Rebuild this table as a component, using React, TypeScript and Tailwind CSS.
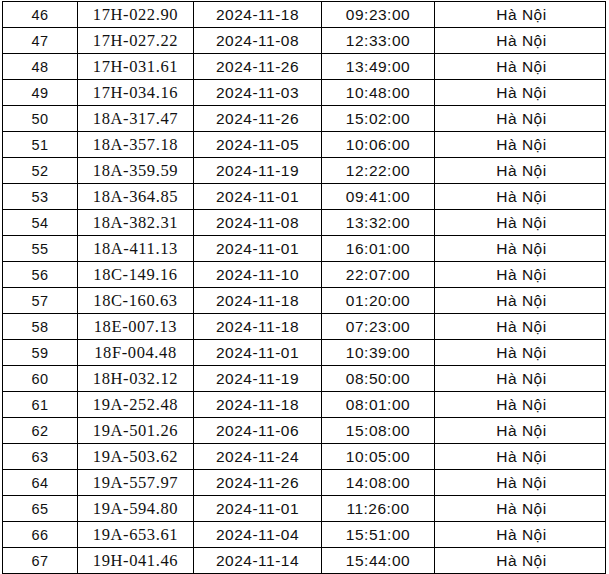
import React from "react";

const rows: [number, string, string, string][] = [
  [46, "17H-022.90", "2024-11-18", "09:23:00"],
  [47, "17H-027.22", "2024-11-08", "12:33:00"],
  [48, "17H-031.61", "2024-11-26", "13:49:00"],
  [49, "17H-034.16", "2024-11-03", "10:48:00"],
  [50, "18A-317.47", "2024-11-26", "15:02:00"],
  [51, "18A-357.18", "2024-11-05", "10:06:00"],
  [52, "18A-359.59", "2024-11-19", "12:22:00"],
  [53, "18A-364.85", "2024-11-01", "09:41:00"],
  [54, "18A-382.31", "2024-11-08", "13:32:00"],
  [55, "18A-411.13", "2024-11-01", "16:01:00"],
  [56, "18C-149.16", "2024-11-10", "22:07:00"],
  [57, "18C-160.63", "2024-11-18", "01:20:00"],
  [58, "18E-007.13", "2024-11-18", "07:23:00"],
  [59, "18F-004.48", "2024-11-01", "10:39:00"],
  [60, "18H-032.12", "2024-11-19", "08:50:00"],
  [61, "19A-252.48", "2024-11-18", "08:01:00"],
  [62, "19A-501.26", "2024-11-06", "15:08:00"],
  [63, "19A-503.62", "2024-11-24", "10:05:00"],
  [64, "19A-557.97", "2024-11-26", "14:08:00"],
  [65, "19A-594.80", "2024-11-01", "11:26:00"],
  [66, "19A-653.61", "2024-11-04", "15:51:00"],
  [67, "19H-041.46", "2024-11-14", "15:44:00"],
];

const sans = "font-['Liberation_Sans',Arial,sans-serif]";
const serif = "font-['Liberation_Serif','Times_New_Roman',serif]";

export default function App() {
  return (
    <div className="w-[609px] h-[574px] bg-white overflow-hidden text-[#111]">
      <div className="ml-[2px] mt-[1px] w-[604px] border-l border-t border-black">
        {rows.map(([n, plate, date, time]) => (
          <div key={n} className="flex h-[26px] border-b border-black">
            <div className={`w-[75px] border-r border-black flex items-center justify-center pt-[1px] ${sans} text-[14.5px] tracking-[0.4px] leading-[18px]`}>
              {n}
            </div>
            <div className={`w-[116px] border-r border-black flex items-center justify-center pt-[1px] ${serif} text-[16.5px] tracking-[0.6px] leading-[18px]`}>
              {plate}
            </div>
            <div className={`w-[128px] border-r border-black flex items-center justify-center pt-[1px] ${sans} text-[15.5px] tracking-[0.5px] leading-[18px]`}>
              {date}
            </div>
            <div className={`w-[113px] border-r border-black flex items-center justify-center pt-[1px] ${sans} text-[15.5px] tracking-[0.5px] leading-[18px]`}>
              {time}
            </div>
            <div className={`w-[171px] border-r border-black flex items-center justify-center pl-[3px] pt-[1px] ${sans} text-[15.5px] tracking-[0.5px] leading-[18px]`}>
              Hà Nội
            </div>
          </div>
        ))}
      </div>
    </div>
  );
}
